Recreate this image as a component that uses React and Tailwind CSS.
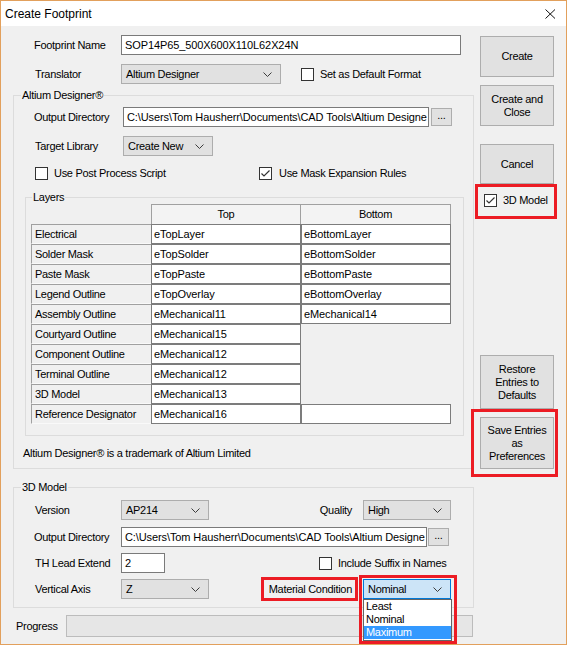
import React from 'react';

const layers = [
  ['Electrical', 'eTopLayer', 'eBottomLayer'],
  ['Solder Mask', 'eTopSolder', 'eBottomSolder'],
  ['Paste Mask', 'eTopPaste', 'eBottomPaste'],
  ['Legend Outline', 'eTopOverlay', 'eBottomOverlay'],
  ['Assembly Outline', 'eMechanical11', 'eMechanical14'],
  ['Courtyard Outline', 'eMechanical15', null],
  ['Component Outline', 'eMechanical12', null],
  ['Terminal Outline', 'eMechanical12', null],
  ['3D Model', 'eMechanical13', null],
  ['Reference Designator', 'eMechanical16', ''],
];

const Chevron = () => (
  <svg width="9" height="5" viewBox="0 0 9 5" className="shrink-0">
    <polyline points="0.5,0.5 4.5,4.5 8.5,0.5" fill="none" stroke="#3c3c3c" strokeWidth="1" />
  </svg>
);

const Checkbox = ({ checked }) => (
  <div className="w-[13px] h-[13px] shrink-0 border border-[#333333] bg-white flex items-center justify-center">
    {checked && (
      <svg width="11" height="11" viewBox="0 0 11 11">
        <polyline points="1.5,5.5 4,8 9.5,2.5" fill="none" stroke="#333333" strokeWidth="1.2" />
      </svg>
    )}
  </div>
);

const Select = ({ value, width, focused }) => (
  <div
    className={`${width} h-[20px] shrink-0 flex items-center justify-between pl-[4px] pr-[8px] border ${
      focused ? 'bg-[#cce4f7] border-[#0078d7]' : 'bg-[#e1e1e1] border-[#adadad]'
    }`}
  >
    <span className="whitespace-nowrap">{value}</span>
    <Chevron />
  </div>
);

const TextBox = ({ value, width }) => (
  <div className={`${width} h-[20px] shrink-0 bg-white border border-[#7a7a7a] pl-[3px] flex items-center overflow-hidden whitespace-nowrap tracking-[-0.1px]`}>
    {value}
  </div>
);

const Dots = ({ ml }) => (
  <div className={`${ml} w-[21px] h-[18px] shrink-0 bg-[#e1e1e1] border border-[#adadad] flex items-center justify-center leading-none pb-[3px]`}>
    ...
  </div>
);

const Button = ({ children, h, mt }) => (
  <div className={`${h} ${mt} w-[74px] bg-[#e1e1e1] border border-[#adadad] flex items-center justify-center text-center leading-[13px]`}>
    {children}
  </div>
);

const RedBox = ({ cls }) => <div className={`absolute border-[3px] border-[#ec1c24] ${cls}`} />;

const outDir = 'C:\\Users\\Tom Hausherr\\Documents\\CAD Tools\\Altium Designe';

export default function App() {
  return (
    <div
      className="relative w-[567px] h-[645px] border border-[#e2a05c] bg-[#f0f0f0] text-black text-[11px] tracking-[-0.3px] overflow-hidden"
      style={{ fontFamily: '"Liberation Sans", Arial, sans-serif' }}
    >
      {/* title bar */}
      <div className="h-[25px] bg-white flex items-center justify-between pl-[4px] pr-[10px]">
        <span className="text-[12px] tracking-normal">Create Footprint</span>
        <svg width="11" height="10" viewBox="0 0 11 10">
          <path d="M0.5 0.5 L10 9.5 M10 0.5 L0.5 9.5" stroke="#111" strokeWidth="1" fill="none" />
        </svg>
      </div>

      <div className="flex">
        {/* left column */}
        <div className="w-[473px] flex flex-col">
          <div className="mt-[9px] h-[20px] flex items-center">
            <div className="w-[120px] pl-[33px]">Footprint Name</div>
            <TextBox width="w-[340px]" value="SOP14P65_500X600X110L62X24N" />
          </div>
          <div className="mt-[9px] h-[20px] flex items-center">
            <div className="w-[120px] pl-[34px]">Translator</div>
            <Select width="w-[160px]" value="Altium Designer" />
            <div className="ml-[20px]"><Checkbox /></div>
            <span className="ml-[6px]">Set as Default Format</span>
          </div>

          {/* Altium Designer group */}
          <div className="relative mt-[11px] ml-[12px] w-[461px] h-[374px] border border-[#dcdcdc] flex flex-col">
            <span className="absolute left-[7px] top-[-8px] px-[1px] leading-[14px] bg-[#f0f0f0]">Altium Designer®</span>
            <div className="mt-[11px] h-[20px] flex items-center">
              <div className="w-[109px] pl-[20px]">Output Directory</div>
              <TextBox width="w-[306px]" value={outDir} />
              <Dots ml="ml-[2px]" />
            </div>
            <div className="mt-[9px] h-[20px] flex items-center">
              <div className="w-[109px] pl-[21px]">Target Library</div>
              <Select width="w-[90px]" value="Create New" />
            </div>
            <div className="mt-[11px] h-[13px] flex items-center">
              <div className="w-[245px] pl-[21px] flex items-center">
                <Checkbox />
                <span className="ml-[6px]">Use Post Process Script</span>
              </div>
              <Checkbox checked />
              <span className="ml-[7px]">Use Mask Expansion Rules</span>
            </div>

            {/* Layers group */}
            <div className="relative mt-[17px] ml-[11px] w-[439px] h-[239px] border border-[#dcdcdc]">
              <span className="absolute left-[6px] top-[-8px] px-[1px] leading-[14px] bg-[#f0f0f0]">Layers</span>
              <div className="mt-[6px] ml-[5px] grid grid-cols-[120px_150px_150px]">
                <div className="h-[20px]" />
                <div className="h-[20px] border-t border-l border-r border-[#a0a0a0] bg-[#f3f3f3] flex items-center justify-center">Top</div>
                <div className="h-[20px] border-t border-r border-[#a0a0a0] bg-[#f3f3f3] flex items-center justify-center">Bottom</div>
                {layers.map(([label, top, bottom]) => (
                  <React.Fragment key={label}>
                    <div className="h-[20px] border-t border-l border-[#a0a0a0] border-b border-b-[#f9f9f9] pl-[3px] flex items-center whitespace-nowrap">
                      {label}
                    </div>
                    <div className="h-[20px] bg-white border border-[#7c7c7c] pl-[2px] flex items-center tracking-[-0.1px]">{top}</div>
                    {bottom === null ? (
                      <div className="h-[20px]" />
                    ) : (
                      <div className="h-[20px] bg-white border border-[#7c7c7c] pl-[2px] flex items-center tracking-[-0.1px]">{bottom}</div>
                    )}
                  </React.Fragment>
                ))}
              </div>
            </div>

            <div className="mt-[10px] pl-[9px] leading-[14px]">Altium Designer® is a trademark of Altium Limited</div>
          </div>

          {/* 3D Model group */}
          <div className="relative mt-[18px] ml-[12px] w-[461px] h-[121px] border border-[#dcdcdc] flex flex-col">
            <span className="absolute left-[7px] top-[-8px] px-[1px] leading-[14px] bg-[#f0f0f0]">3D Model</span>
            <div className="mt-[12px] h-[20px] flex items-center">
              <div className="w-[107px] pl-[21px]">Version</div>
              <Select width="w-[88px]" value="AP214" />
              <div className="w-[143px] text-right">Quality</div>
              <div className="ml-[11px]"><Select width="w-[88px]" value="High" /></div>
            </div>
            <div className="mt-[7px] h-[20px] flex items-center">
              <div className="w-[107px] pl-[20px]">Output Directory</div>
              <TextBox width="w-[306px]" value={outDir} />
              <Dots ml="ml-[1px]" />
            </div>
            <div className="mt-[6px] h-[20px] flex items-center">
              <div className="w-[107px] pl-[21px]">TH Lead Extend</div>
              <TextBox width="w-[44px]" value="2" />
              <div className="ml-[154px]"><Checkbox /></div>
              <span className="ml-[6px]">Include Suffix in Names</span>
            </div>
            <div className="mt-[6px] h-[20px] flex items-center">
              <div className="w-[107px] pl-[21px]">Vertical Axis</div>
              <Select width="w-[88px]" value="Z" />
              <div className="w-[143px] text-right">Material Condition</div>
              <div className="ml-[11px]"><Select width="w-[88px]" value="Nominal" focused /></div>
            </div>
          </div>

          <div className="mt-[7px] h-[22px] flex items-center">
            <div className="w-[65px] pl-[15px]">Progress</div>
            <div className="w-[407px] h-[22px] bg-[#e6e6e6] border border-[#bcbcbc]" />
          </div>
        </div>

        {/* right column */}
        <div className="flex flex-col pl-[6px]">
          <Button h="h-[41px]" mt="mt-[10px]">Create</Button>
          <Button h="h-[41px]" mt="mt-[8px]">Create and<br />Close</Button>
          <Button h="h-[40px]" mt="mt-[18px]">Cancel</Button>
          <div className="mt-[10px] h-[13px] pl-[4px] flex items-center">
            <Checkbox checked />
            <span className="ml-[6px]">3D Model</span>
          </div>
          <Button h="h-[54px]" mt="mt-[148px]">Restore<br />Entries to<br />Defaults</Button>
          <Button h="h-[52px]" mt="mt-[8px]">Save Entries<br />as<br />Preferences</Button>
        </div>
      </div>

      {/* open dropdown list */}
      <div className="absolute left-[362px] top-[598px] w-[89px] h-[42px] bg-white border border-[#646464] flex flex-col leading-[13px]">
        <div className="h-[13px] pl-[2px]">Least</div>
        <div className="h-[13px] pl-[2px]">Nominal</div>
        <div className="h-[13px] pl-[2px] bg-[#3399ff] text-white">Maximum</div>
      </div>

      {/* annotation boxes */}
      <RedBox cls="left-[474px] top-[183px] w-[82px] h-[35px]" />
      <RedBox cls="left-[470px] top-[408px] w-[87px] h-[68px]" />
      <RedBox cls="left-[260px] top-[576px] w-[97px] h-[24px]" />
      <RedBox cls="left-[358px] top-[574px] w-[98px] h-[69px]" />
    </div>
  );
}
